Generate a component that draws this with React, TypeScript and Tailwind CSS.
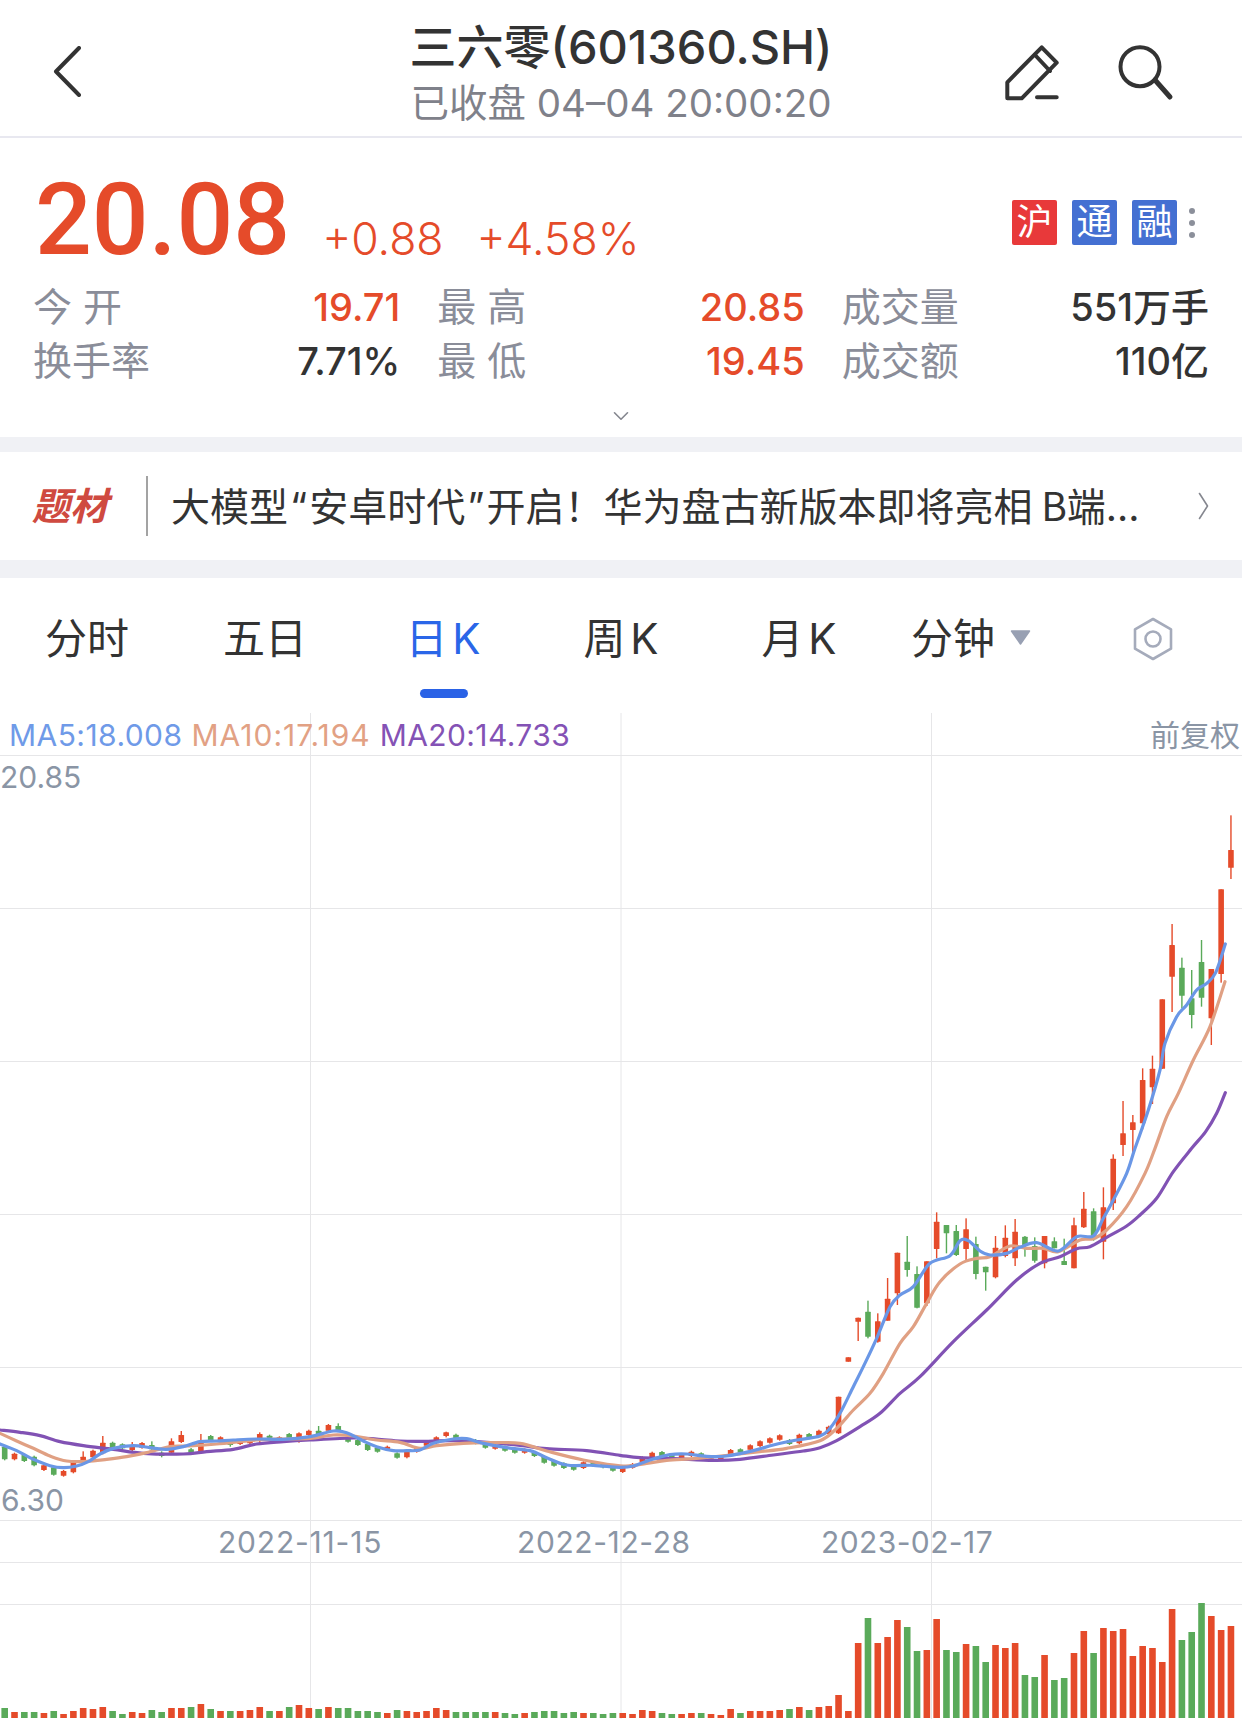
import { ChevronDown } from 'lucide-react';

const RED = '#e54b2a';
const GREEN = '#5aaa5a';

// candles traced from the chart: [isRed, bodyTop, bodyBottom, wickTop?, wickLow?]
type Candle = [number, number, number, number?, number?];

const flatCandles: Candle[] = [
  [0, 200, 238], [1, 221, 238], [0, 225, 243], [0, 230, 256], [1, 256, 270], [0, 262, 284], [1, 273, 287],
  [1, 246, 277], [1, 230, 245, 214], [1, 212, 232], [1, 188, 220, 168], [0, 188, 203], [0, 193, 205],
  [1, 195, 210, 186], [1, 189, 203], [0, 195, 208, 184], [0, 218, 228, 214, 232], [1, 184, 218, 175],
  [1, 165, 186, 153], [0, 208, 218, 204], [1, 188, 218, 162], [0, 168, 182], [1, 172, 186], [0, 182, 195, 180, 200],
  [1, 185, 192], [1, 180, 190], [1, 162, 175, 157, 190], [0, 167, 178], [1, 172, 182], [0, 162, 178], [1, 160, 185],
  [1, 152, 165], [0, 152, 165, 138], [1, 135, 152], [0, 138, 152, 130], [0, 175, 185], [0, 180, 195], [0, 192, 210],
  [0, 203, 215], [1, 200, 210], [0, 220, 233], [1, 210, 232], [1, 205, 215],
  [1, 185, 197], [1, 172, 190], [1, 157, 168, 155, 172], [0, 164, 175], [0, 175, 185], [0, 180, 190], [0, 192, 203],
  [1, 195, 206], [0, 200, 212], [0, 205, 218], [1, 208, 218], [0, 218, 228], [0, 230, 248], [0, 243, 257],
  [0, 250, 264], [0, 257, 269], [1, 247, 264], [0, 247, 258], [0, 252, 262], [0, 260, 272], [1, 264, 276],
  [1, 252, 263], [1, 232, 246], [1, 218, 232], [0, 216, 228], [0, 222, 232], [1, 222, 236], [1, 215, 228],
  [0, 220, 232], [1, 228, 236], [1, 228, 237], [1, 210, 222], [0, 208, 218], [1, 196, 209], [1, 184, 198],
  [1, 175, 188], [1, 166, 179], [0, 180, 192], [1, 164, 190], [0, 162, 175], [1, 152, 167], [1, 140, 162],
];

const risingCandles: Candle[] = [
  [1, 740, 850, 740, 852], [1, 622, 635], [1, 503, 515, 503, 573], [0, 485, 560, 452, 565], [1, 514, 575, 490, 578],
  [1, 446, 512, 384], [1, 308, 430, 308, 465], [0, 335, 360, 258, 380], [0, 372, 473, 349, 475], [1, 334, 460, 334, 468],
  [1, 215, 297, 187, 325], [0, 225, 250, 225, 310], [0, 243, 315, 225, 318], [1, 238, 297, 205, 330], [0, 282, 372, 260, 388],
  [0, 350, 367, 350, 422], [1, 293, 382, 258, 385], [1, 263, 318, 226, 322], [1, 245, 325, 207, 348], [0, 260, 285, 258, 320],
  [0, 288, 332, 262, 338], [1, 258, 340, 258, 355], [0, 274, 295, 262], [0, 333, 345, 266], [1, 226, 355, 203],
  [1, 176, 232, 126, 234], [0, 184, 268, 175, 272], [1, 172, 275, 112, 328], [1, 26, 160, 13, 180],
];

const topCandles: Candle[] = [
  [1, 1000, 1035, 903, 1068], [1, 967, 990, 945, 1060], [1, 840, 970, 805, 988], [1, 806, 862, 767, 912], [1, 598, 806],
  [1, 435, 530, 372, 636], [0, 503, 587, 473, 625], [0, 595, 645, 510, 685], [0, 486, 593, 420, 620], [1, 507, 655, 507, 735],
  [1, 268, 522, 268, 548], [1, 150, 203, 46, 237],
];

const candles = [
  ...flatCandles.map((c) => ({ c, base: 1380, pad: 3 })),
  ...risingCandles.map((c) => ({ c, base: 1150, pad: 0 })),
  ...topCandles.map((c) => ({ c, base: 800, pad: 0 })),
];

// volume bars: [isRed, height]
const volumes = [
  [0, 10], [1, 6], [0, 6], [0, 6], [1, 5], [0, 7], [1, 4], [1, 7], [1, 10], [1, 9], [1, 11], [0, 7], [0, 4], [1, 6], [1, 5], [0, 8],
  [0, 6], [1, 10], [1, 10], [0, 11], [1, 14], [0, 9], [1, 7], [0, 7], [1, 7], [1, 8], [1, 11], [0, 7], [1, 7], [0, 11], [1, 13], [1, 10],
  [0, 9], [1, 11], [0, 10], [0, 10], [0, 7], [0, 7], [0, 6], [1, 5], [0, 8], [1, 7], [1, 6], [1, 7], [1, 10], [1, 8], [0, 6], [0, 6],
  [0, 6], [0, 6], [1, 6], [0, 5], [0, 4], [1, 5], [0, 6], [0, 7], [0, 7], [0, 5], [0, 6], [1, 5], [0, 5], [0, 4], [0, 5], [1, 5],
  [1, 4], [1, 8], [1, 7], [0, 5], [0, 4], [1, 4], [1, 5], [0, 5], [1, 4], [1, 3], [1, 9], [0, 5], [1, 7], [1, 7], [1, 7], [1, 8],
  [0, 9], [1, 11], [0, 8], [1, 11], [1, 12], [1, 23], [1, 7], [1, 75], [0, 100], [1, 75], [1, 81], [1, 98], [0, 91], [0, 67], [1, 68], [1, 99],
  [0, 68], [0, 66], [1, 74], [0, 72], [0, 56], [1, 73], [1, 70], [1, 75], [0, 43], [0, 41], [1, 63], [0, 38], [0, 40], [1, 65], [1, 87], [0, 65],
  [1, 90], [1, 87], [1, 89], [1, 62], [1, 72], [1, 70], [1, 56], [1, 109], [0, 78], [0, 86], [0, 115], [1, 102], [1, 88], [1, 92],
];

const candleX = (i: number) => 4.7 + i * 9.81;

// each moving average is traced in three stretches of the chart
const trace = (pts: number[][], x0: number, y0: number) => pts.map(([x, y]) => [x0 + x / 3, y0 + y / 3]);

const ma5 = [
  ...trace([[0, 192], [50, 212], [100, 238], [150, 257], [190, 263], [230, 258], [265, 245], [300, 222], [340, 205], [400, 197], [450, 203], [500, 208], [550, 200], [600, 185], [650, 183], [700, 180], [770, 177], [850, 178], [930, 170], [1000, 153], [1040, 158], [1090, 183], [1130, 200], [1180, 212], [1220, 212]], 0, 1380),
  ...trace([[0, 210], [40, 190], [100, 177], [140, 176], [190, 190], [260, 203], [330, 212], [380, 233], [440, 255], [520, 256], [600, 262], [640, 258], [690, 240], [750, 224], [800, 222], [860, 229], [920, 228], [1000, 212], [1060, 195], [1130, 180]], 420, 1380),
  ...trace([[0, 858], [30, 835], [60, 790], [100, 710], [130, 650], [170, 565], [210, 470], [240, 435], [280, 410], [330, 340], [390, 317], [420, 272], [445, 272], [480, 303], [510, 315], [560, 310], [600, 292], [650, 278], [715, 303], [770, 260], [820, 258], [850, 205], [880, 150], [920, 70]], 820, 1150),
  ...trace([[945, 1045], [985, 930], [1020, 810], [1035, 730], [1070, 650], [1100, 615], [1130, 570], [1160, 550], [1187, 518], [1216, 432]], 820, 800),
];

const ma10 = [
  ...trace([[0, 160], [50, 183], [100, 205], [150, 228], [200, 243], [260, 244], [320, 238], [380, 230], [440, 218], [510, 200], [560, 198], [650, 192], [770, 180], [850, 177], [930, 175], [1000, 165], [1060, 168], [1130, 180], [1200, 187]], 0, 1380),
  ...trace([[0, 205], [50, 197], [130, 190], [200, 188], [300, 190], [380, 213], [490, 240], [610, 258], [680, 250], [740, 241], [830, 235], [930, 225], [1020, 215], [1100, 205]], 420, 1380),
  ...trace([[0, 872], [50, 835], [100, 780], [150, 730], [190, 670], [240, 580], [280, 530], [320, 460], [360, 395], [420, 342], [470, 325], [510, 320], [570, 288], [620, 295], [670, 295], [715, 305], [780, 270], [820, 266], [860, 240], [920, 170], [975, 70]], 820, 1150),
  ...trace([[1005, 1045], [1040, 950], [1075, 880], [1120, 780], [1170, 680], [1215, 545]], 820, 800),
];

const ma20 = [
  ...trace([[0, 150], [60, 157], [120, 167], [180, 185], [250, 197], [340, 208], [430, 220], [550, 222], [620, 215], [700, 208], [770, 192], [850, 185], [930, 180], [1060, 174], [1130, 177], [1200, 183]], 0, 1380),
  ...trace([[0, 184], [100, 182], [200, 187], [300, 196], [380, 206], [500, 212], [600, 226], [660, 233], [760, 236], [880, 241], [960, 238], [1060, 225], [1150, 213]], 420, 1380),
  ...trace([[0, 893], [50, 872], [120, 830], [180, 790], [240, 730], [300, 680], [400, 575], [500, 480], [590, 390], [660, 340], [720, 320], [770, 296], [810, 290], [860, 262], [920, 228], [960, 195], [1010, 145], [1060, 65]], 820, 1150),
  ...trace([[1115, 1045], [1157, 995], [1190, 940], [1216, 878]], 820, 800),
];

// catmull-rom through the traced points
function smooth(pts: number[][]) {
  let d = `M${pts[0][0]} ${pts[0][1]}`;
  for (let i = 0; i < pts.length - 1; i++) {
    const p0 = pts[i - 1] ?? pts[i];
    const p1 = pts[i];
    const p2 = pts[i + 1];
    const p3 = pts[i + 2] ?? p2;
    d += ` C${p1[0] + (p2[0] - p0[0]) / 6} ${p1[1] + (p2[1] - p0[1]) / 6} ${p2[0] - (p3[0] - p1[0]) / 6} ${p2[1] - (p3[1] - p1[1]) / 6} ${p2[0]} ${p2[1]}`;
  }
  return d;
}

function Chart() {
  return (
    <svg className="absolute inset-0 w-full h-full" viewBox="0 713 1242 1006">
      {[755, 908, 1061, 1214, 1367, 1520, 1562, 1604].map((y) => (
        <line key={y} x1="0" x2="1242" y1={y + 0.5} y2={y + 0.5} stroke="#e6e6e8" />
      ))}
      {[310.5, 621, 931.5].map((x) => (
        <line key={x} x1={x} x2={x} y1="713" y2="1719" stroke="#e6e6e8" />
      ))}
      {candles.map(({ c, base, pad }, i) => {
        const [red, top, bot, hi, lo] = c;
        const color = red ? RED : GREEN;
        const x = candleX(i);
        return (
          <g key={i} fill={color}>
            <rect x={x - 0.7} width="1.4" y={base + (hi ?? top - pad) / 3} height={((lo ?? bot + pad) - (hi ?? top - pad)) / 3} />
            <rect x={x - 2.8} width="5.6" y={base + top / 3} height={(bot - top) / 3} rx="0.5" />
          </g>
        );
      })}
      <path d={smooth(ma20)} fill="none" stroke="#8152b4" strokeWidth="3.2" strokeLinecap="round" />
      <path d={smooth(ma10)} fill="none" stroke="#e0a083" strokeWidth="3.2" strokeLinecap="round" />
      <path d={smooth(ma5)} fill="none" stroke="#6a97e6" strokeWidth="3.2" strokeLinecap="round" />
      {volumes.map(([red, h], i) => (
        <rect key={i} x={candleX(i) - 3.3} width="6.6" y={1718 - h} height={h} fill={red ? RED : GREEN} />
      ))}
    </svg>
  );
}

const stats = [
  { label: '今 开', value: '19.71', color: 'text-[#e54b2a]' },
  { label: '最 高', value: '20.85', color: 'text-[#e54b2a]' },
  { label: '成交量', value: '551万手', color: 'text-[#333333]' },
  { label: '换手率', value: '7.71%', color: 'text-[#333333]' },
  { label: '最 低', value: '19.45', color: 'text-[#e54b2a]' },
  { label: '成交额', value: '110亿', color: 'text-[#333333]' },
];

const tabs = ['分时', '五日', '日 K', '周 K', '月 K'];

export default function App() {
  return (
    <div className="w-[1242px] h-[1719px] overflow-hidden flex flex-col bg-white text-[#333333] [font-family:Inter,'Noto_Sans_CJK_SC',sans-serif]">
      <header className="h-[138px] shrink-0 border-b-2 border-[#e8e8f0] grid grid-cols-[1fr_auto_1fr]">
        <div className="pl-[53px] pt-[46px]">
          <svg width="28" height="51" viewBox="0 0 28 51" fill="none" stroke="#333333" strokeWidth="4" strokeLinecap="round" strokeLinejoin="round">
            <path d="M26 2 3 25.5 26 49" />
          </svg>
        </div>
        <div className="flex flex-col items-center pt-[16px]">
          <div className="text-[47px] leading-[62px] font-medium">三六零(601360.SH)</div>
          <div className="text-[38.5px] leading-[50px] text-[#7f818a]">已收盘 04–04 20:00:20</div>
        </div>
        <div className="flex items-start justify-end">
          <svg className="mt-[30px] mr-[30px]" width="80" height="85" viewBox="0 0 80 85" fill="none" stroke="#333333" strokeWidth="4" strokeLinejoin="round" strokeLinecap="round">
            <path d="M51.7 17.3 66.7 32.7 31.7 68.3H17.3V52.3Z" />
            <path d="M45 25 60 41M47 67.3H66.7" />
          </svg>
          <svg className="mt-[30px] mr-[62px]" width="80" height="85" viewBox="0 0 80 85" fill="none" stroke="#333333" strokeWidth="4" strokeLinecap="round">
            <circle cx="40" cy="36.7" r="19.5" />
            <path d="M55 50 70 67" strokeWidth="5" />
          </svg>
        </div>
      </header>

      <section className="h-[299px] shrink-0 flex flex-col">
        <div className="h-[132px] flex items-start pt-[32px] pl-[35px] pr-[47px]">
          <span className="[font-family:Roboto,sans-serif] font-medium text-[100px] leading-[100px] text-[#e54b2a]">20.08</span>
          <span className="ml-[32px] mt-[39px] text-[44.5px] leading-[60px] font-light text-[#e54b2a]">+0.88</span>
          <span className="ml-[33px] mt-[39px] text-[44.5px] leading-[60px] font-light text-[#e54b2a]">+4.58%</span>
          <div className="ml-auto flex items-center gap-[15px] mt-[30px] text-white text-[36px] leading-[45px]">
            <span className="w-[45px] h-[45px] rounded-[2px] bg-[#e8393a] text-center">沪</span>
            <span className="w-[45px] h-[45px] rounded-[2px] bg-[#4470d2] text-center">通</span>
            <span className="w-[45px] h-[45px] rounded-[2px] bg-[#4470d2] text-center">融</span>
          </div>
          <div className="ml-[12px] mt-[38px] flex flex-col gap-[6px]">
            <span className="w-[6px] h-[6px] rounded-full bg-[#8b8f9a]" />
            <span className="w-[6px] h-[6px] rounded-full bg-[#8b8f9a]" />
            <span className="w-[6px] h-[6px] rounded-full bg-[#8b8f9a]" />
          </div>
        </div>
        <div className="mt-[10px] px-[33px] grid grid-cols-3 gap-x-[37px] text-[38px] leading-[54px]">
          {stats.map((s) => (
            <div key={s.label} className="flex justify-between">
              <span className="text-[39px] text-[#8a8d99]">{s.label}</span>
              <span className={`font-medium ${s.color}`}>{s.value}</span>
            </div>
          ))}
        </div>
        <div className="flex-1 flex items-center justify-center pt-[7px]">
          <ChevronDown size={26} strokeWidth={1.5} className="text-[#85878f]" />
        </div>
      </section>

      <div className="h-[15px] shrink-0 bg-[#f0f1f5]" />

      <section className="h-[108px] shrink-0 flex items-center pl-[32px] pr-[33px]">
        <span className="w-[114px] text-[38px] font-bold italic text-[#cf4a40]">题材</span>
        <span className="w-[2px] h-[60px] bg-[#a3a3a3]" />
        <span className="ml-[23px] flex-1 [font-family:'Noto_Sans_CJK_SC',sans-serif] text-[39px] text-[#333333] whitespace-nowrap overflow-hidden">
          大模型<span className="mx-[2px] [font-family:Inter,sans-serif]">“</span>安卓时代<span className="mx-[2px] [font-family:Inter,sans-serif]">”</span>开启！华为盘古新版本即将亮相 B端<span className="[font-family:Inter,sans-serif]">...</span>
        </span>
        <svg width="11" height="28" viewBox="0 0 11 28" fill="none" stroke="#85878f" strokeWidth="1.6" strokeLinecap="round" strokeLinejoin="round">
          <path d="M1.5 1.5 9.5 14 1.5 26.5" />
        </svg>
      </section>

      <div className="h-[18px] shrink-0 bg-[#f0f1f5]" />

      <nav className="h-[135px] shrink-0 flex items-start pt-[35px] text-[42px] leading-[52px]">
        {tabs.map((t) => (
          <div key={t} className={`w-[178px] pr-[4px] flex flex-col items-center [word-spacing:-7px] ${t === '日 K' ? 'text-[#2a66e8]' : 'text-[#333333]'}`}>
            <span>{t}</span>
            {t === '日 K' && <span className="ml-[2px] mt-[24px] w-[48px] h-[9px] rounded-full bg-[#2a62e6]" />}
          </div>
        ))}
        <div className="ml-[21px] flex items-center">
          <span>分钟</span>
          <svg className="ml-[15px] mb-[4px]" width="21" height="15" viewBox="0 0 21 15" fill="#98a0b3">
            <path d="M1.5 1H19.5L10.5 14Z" stroke="#98a0b3" strokeWidth="1.5" strokeLinejoin="round" />
          </svg>
        </div>
        <svg className="ml-[100px] mt-[3px]" width="44" height="46" viewBox="0 0 44 46" fill="none" stroke="#a5abbb" strokeWidth="2.6">
          <path d="M22 3 40 13.3V32.7L22 43 4 32.7V13.3Z" strokeLinejoin="round" />
          <circle cx="22" cy="23" r="7.5" />
        </svg>
      </nav>

      <div className="relative flex-1">
        <Chart />
        <div className="absolute left-[9px] top-[6px] flex gap-[9px] text-[30px] leading-[32px]">
          <span className="text-[#6f9ae8] tracking-[0.44px]">MA5:18.008</span>
          <span className="text-[#e2a184] tracking-[1px]">MA10:17.194</span>
          <span className="text-[#8452b5] tracking-[0.4px]">MA20:14.733</span>
        </div>
        <span className="absolute right-[2px] top-[6px] text-[30px] leading-[32px] text-[#8a95a5]">前复权</span>
        <span className="absolute left-[0px] top-[48px] text-[30px] leading-[32px] text-[#8a95a5]">20.85</span>
        <span className="absolute left-[1px] top-[771px] text-[30px] leading-[32px] text-[#8a95a5]">6.30</span>
        <span className="absolute left-[218px] top-[813px] text-[30px] leading-[32px] tracking-[0.8px] text-[#8a95a5]">2022-11-15</span>
        <span className="absolute left-[517px] top-[813px] text-[30px] leading-[32px] tracking-[0.6px] text-[#8a95a5]">2022-12-28</span>
        <span className="absolute left-[821px] top-[813px] text-[30px] leading-[32px] tracking-[0.4px] text-[#8a95a5]">2023-02-17</span>
      </div>
    </div>
  );
}
